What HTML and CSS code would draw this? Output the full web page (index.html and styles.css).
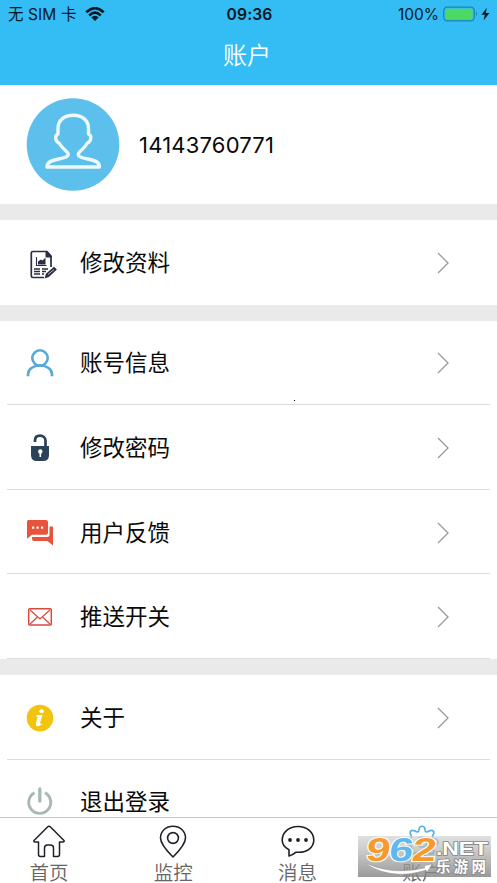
FILE: index.html
```html
<!DOCTYPE html>
<html lang="zh-CN">
<head>
<meta charset="utf-8">
<title>账户</title>
<link rel="stylesheet" href="styles.css">
</head>
<body>
<div class="app">
  <header class="header">
    <div class="status">
      <div class="carrier"><span>无 SIM 卡</span>
        <svg width="20" height="14" viewBox="0 0 20 14" fill="none" stroke="#071923" stroke-width="2.7"><path d="M1.300 5.200Q10-2.800 18.700 5.200M4.300 8.400Q10 3 15.700 8.400"/><path d="M6.300 10.300Q10 7 13.700 10.300L10 13.900Z" fill="#071923" stroke="none"/></svg>
      </div>
      <div class="clock">09:36</div>
      <div class="power"><span>100%</span>
        <svg width="48" height="16" viewBox="0 0 48 16"><rect x=".7" y="1.1" width="30.6" height="13.8" rx="3.6" fill="none" stroke="#1c83b0" stroke-width="1.2"/><rect x="2.4" y="2.8" width="27.2" height="10.4" rx="2" fill="#4cd964"/><path d="M33 5.6q2 2.4 0 4.8z" fill="#1c83b0"/><path d="M43.8 1.7 38.500 8.800h3.300l-1.200 5.800 5.800-7.700h-3.600z" fill="#071923"/></svg>
      </div>
    </div>
    <h1 class="title">账户</h1>
  </header>
  <main class="content">
    <section class="profile">
      <svg class="avatar" width="94" height="94" viewBox="0 0 94 94"><circle cx="47" cy="46.500" r="46.300" fill="#5dbfeb"/><path d="M47.300 17.800C38 17.800 32 23 32 31v5.500c-3.500 1.500-3 7 1 9 2 3.500 5 6.500 8 9 2 2 1.500 4-1 5C33 62.500 21 61.500 21 69.500H73.500C73.500 61.500 61.500 62.500 54.500 59.500c-2.500-1-3-3-1-5 3-2.500 6-5.500 8-9 4-2 4.500-7.500 1-9V31c0-8-6-13.200-15.200-13.200z" transform="translate(0 -.5)" fill="none" stroke="#eef9fe" stroke-width="3.400" stroke-linejoin="round"/></svg>
      <span class="phone">14143760771</span>
    </section>
    <section class="group plain">
      <div class="row"><svg class="icon low" viewBox="0 0 30 30" fill="none" stroke="#292d45"><path d="M19 27.500H8Q6.300 27.500 6.300 26V3Q6.300 1.500 8 1.500H22L26 6V17" stroke-width="1.700"/><path d="M21 1v6h6z" fill="#292d45"/><path d="M11.500 7v8.500h10" stroke-width="1.100"/><path d="M13 14.500v-3l3-2 1.500 1 3-3v7z" fill="#292d45" stroke="none"/><path d="M9 19h6M17 19h6M9 21.500h6M17 21.500h4M9 24h6M17 24h2" stroke-width="1.300"/><path d="m20.500 27.500 1-3.500 7.500-6.500 2 2-7.500 7z" fill="#292d45" stroke-width="1.200"/><path d="m23 24.500 6-5" stroke="#fff" stroke-width=".7"/></svg><span class="label">修改资料</span><svg class="chevron" viewBox="0 0 12 22"><path d="m1 1 10 10L1 21"/></svg></div>
    </section>
    <section class="group">
      <div class="row"><svg class="icon" viewBox="0 0 30 30" fill="none" stroke="#58a9d7" stroke-width="2.600"><circle cx="15" cy="10" r="7.700"/><path d="M3 28.200v-1.700c0-5.500 5-9 12-9s12 3.500 12 9v1.700"/></svg><span class="label">账号信息</span><svg class="chevron" viewBox="0 0 12 22"><path d="m1 1 10 10L1 21"/></svg></div>
      <div class="row"><svg class="icon" viewBox="0 0 30 30"><path d="M10 9V7.500C10 4.500 12 2.700 15 2.700s5.500 2 5.500 5V14" fill="none" stroke="#2b4059" stroke-width="2.700"/><path d="M6 13h18v9q0 6-6 6h-6q-6 0-6-6z" fill="#2b4059"/><circle cx="15.300" cy="18.500" r="2.200" fill="#fff"/><path d="M14.500 19h1.600v5h-1.600z" fill="#fff"/></svg><span class="label">修改密码</span><svg class="chevron" viewBox="0 0 12 22"><path d="m1 1 10 10L1 21"/></svg></div>
      <div class="row"><svg class="icon" viewBox="0 0 30 30" fill="#e9533b"><path d="M3.500 2H21q2 0 2 2v11q0 1.700-2 1.700H7l-5 4V4q0-2 1.500-2z"/><path d="M24.500 8.500H28V27.500l-5.500-4.500H9q-2 0-2-2v-2h15.500q2 0 2-2z"/><path d="M7 8.500h2.200v2.200H7zM11.500 8.500h2.200v2.200h-2.200zM16 8.500h2.200v2.200H16z" fill="#fff"/></svg><span class="label">用户反馈</span><svg class="chevron" viewBox="0 0 12 22"><path d="m1 1 10 10L1 21"/></svg></div>
      <div class="row"><svg class="icon" viewBox="0 0 30 30" fill="none" stroke="#d34b3e" stroke-width="1.500"><rect x="3.700" y="6.700" width="22.600" height="16.200" rx="1" /><path d="m5 8 10 9L25 8M5 22l7.500-7M25 22l-7.500-7" stroke-width="1.200"/></svg><span class="label">推送开关</span><svg class="chevron" viewBox="0 0 12 22"><path d="m1 1 10 10L1 21"/></svg></div>
    </section>
    <section class="group">
      <div class="row"><svg class="icon" viewBox="0 0 30 30"><circle cx="15" cy="15" r="13.300" fill="#f1c40f"/><ellipse cx="16.600" cy="8.200" rx="2.200" ry="1.900" fill="#fff"/><path d="M11.500 12h6l-2.500 8q-.3 1.500 2.500.3-1.500 3-4.500 2.900-3-.2-2-3.200l1.600-5.500q.3-1-1.500-1z" fill="#fff"/></svg><span class="label">关于</span><svg class="chevron" viewBox="0 0 12 22"><path d="m1 1 10 10L1 21"/></svg></div>
      <div class="row"><svg class="icon" viewBox="0 0 30 30" fill="none" stroke="#a9b8b6" stroke-width="2.900"><path d="M9.500 5.700a11 11 0 1 0 10.500 0"/><path d="M14.800 2v12" stroke-width="3.300" stroke-linecap="round"/></svg><span class="label">退出登录</span></div>
    </section>
  </main>
  <nav class="tabs">
    <div class="tab"><svg width="34" height="34" viewBox="0 0 34 34" fill="none" stroke="#202027" stroke-width="1.500" stroke-linejoin="round"><path d="M18.500 2 32 15.500q.5 1.500-1 1.500h-3.500v12.500q0 2-2 2h-4V23q0-3-3-3h-3q-3 0-3 3v8.500h-4q-2 0-2-2V17H3q-1.500 0-1-1.500L15.500 2q1.500-1.400 3 0"/></svg><span>首页</span></div>
    <div class="tab"><svg width="34" height="34" viewBox="0 0 34 34" fill="none" stroke="#202027" stroke-width="1.600" stroke-linejoin="round"><path d="M17 32Q4.500 19.500 4.500 13C4.500 6 10 1.200 17 1.200S29.500 6 29.500 13Q29.500 19.500 17 32z"/><circle cx="17" cy="13" r="5.400"/></svg><span>监控</span></div>
    <div class="tab"><svg width="34" height="34" viewBox="0 0 34 34" fill="none" stroke="#202027" stroke-width="1.600" stroke-linejoin="round"><path d="M8 31v-6.200C3.500 22.500 1.200 19 1.200 15 1.200 7.500 8 1.500 17 1.500S32.800 7.500 32.800 15 26 27.500 17 27.200h-2Q12 30 8 31z"/><g fill="#202027" stroke="none"><circle cx="9" cy="15" r="1.900"/><circle cx="17" cy="15" r="1.900"/><circle cx="25" cy="15" r="1.900"/></g></svg><span>消息</span></div>
    <div class="tab"><svg width="34" height="34" viewBox="0 0 34 34" fill="none" stroke="#55b3e2" stroke-width="1.700" stroke-linejoin="round"><path d="M14 5c0-5 6-5 6 0 0 2 2 2.500 4 1 4-2 6 1 4 4-1 2-.5 4 2 4 4 0 4 6 0 6-2.500 0-3 2-2 4 2 4-1 6-4 4-2-1-4-.5-4 2 0 4-6 4-6 0 0-2.500-2-3-4-2-4 2-6-1-4-4 1-2 .5-4-2-4-4 0-4-6 0-6 2.500 0 3-2 2-4-2-3 0-6 4-4 2 1.500 4 1 4-1z"/><circle cx="17" cy="17" r="5"/></svg><span>账户</span></div>
  </nav>
  <svg class="watermark" width="134" height="42" viewBox="0 0 134 42">
    <defs>
      <linearGradient id="plate" x2="0" y2="1"><stop offset="0" stop-color="#d0d0d0" stop-opacity=".65"/><stop offset="1" stop-color="#808080" stop-opacity=".8"/></linearGradient>
    </defs>
    <rect width="133" height="41" fill="url(#plate)"/>
    <g class="digits" transform="translate(4.500 0) skewX(-8)"><text x="6" y="24.500" textLength="24" lengthAdjust="spacingAndGlyphs" fill="#f59a2d">9</text><text x="29" y="24.500" textLength="24" lengthAdjust="spacingAndGlyphs" fill="#61b8ed">6</text><text x="52" y="24.500" textLength="24" lengthAdjust="spacingAndGlyphs" fill="#f59a2d">2</text></g>
    <path d="M7 27Q35 40 67 32l-1-2 8-2-5 8-1-2Q33 45 7 27z" fill="#fff" stroke="#999" stroke-width=".4"/>
    <text class="domain" x="78" y="19" textLength="52" lengthAdjust="spacingAndGlyphs">.NET</text>
    <text class="site" x="78" y="36" textLength="50">乐游网</text>
  </svg>
  <i class="speck"></i>
</div>
</body>
</html>
```
FILE: styles.css
```css
* { box-sizing: border-box; }
body { margin: 0; background: #fff; overflow: hidden; }
.app {
  position: relative;
  height: 883px;
  display: flex;
  flex-direction: column;
  overflow: hidden;
  font-family: Inter, "Noto Sans CJK SC", sans-serif;
  color: #0a0a0a;
}
svg { display: block; flex: none; }
.header { height: 85px; flex: none; background: #34bcf5; }
.status {
  height: 28px;
  padding: 0 6px 0 8px;
  display: grid;
  grid-template-columns: 1fr auto 1fr;
  align-items: center;
  font-size: 15.5px;
  line-height: 20px;
  color: #071923;
}
.carrier, .power { display: flex; align-items: center; }
.carrier { gap: 8px; }
.carrier span { letter-spacing: .1px; padding-top: 1px; }
.power { justify-content: flex-end; gap: 4px; }
.power span, .clock { padding-top: 1px; }
.clock { font-weight: 600; font-size: 15.7px; letter-spacing: .1px; }
.title {
  margin: 9px 3px 0 0;
  text-align: center;
  font-size: 24px;
  line-height: 37px;
  font-weight: 350;
  color: #fff;
}
.content {
  flex: 1;
  min-height: 0;
  overflow: hidden;
  background: #eaeaea;
  display: flex;
  flex-direction: column;
  gap: 16px;
}
.profile {
  height: 119px;
  flex: none;
  padding-left: 26px;
  display: flex;
  align-items: center;
  gap: 19px;
  background: #fff;
}
.phone { font-size: 22px; letter-spacing: .2px; }
.group { flex: none; background: #fff; }
.row {
  height: 84.6px;
  margin: 0 7px;
  padding: 2px 41px 0 18px;
  display: flex;
  align-items: center;
  border-bottom: 1px solid #dcdcdc;
}
.plain .row { border-bottom-color: transparent; }
.icon { width: 30px; height: 30px; overflow: visible; }
.low { margin-top: 5px; }
.label {
  flex: 1;
  margin-left: 25px;
  font-size: 22.5px;
  line-height: 34px;
}
.chevron { width: 12px; height: 22px; fill: none; stroke: #999; stroke-width: 1.3; }
.tabs {
  height: 66px;
  flex: none;
  display: grid;
  grid-template-columns: repeat(4, 124.25px);
  margin-left: -13px;
  padding-top: 7px;
  background: #fff;
  border-top: 1px solid #c6c6c6;
}
.tab {
  display: flex;
  flex-direction: column;
  align-items: center;
  gap: 4px;
  font-size: 19.5px;
  line-height: 20px;
  font-weight: 350;
  color: #666;
}
.watermark { position: absolute; left: 358px; top: 836px; overflow: visible; }
.digits {
  font: 700 33px "Liberation Sans", sans-serif;
  stroke: #fff;
  stroke-width: 2px;
  paint-order: stroke;
}
.domain, .site { fill: #fff; stroke: #888; stroke-width: 1.6px; paint-order: stroke; }
.domain { font: 700 19px "Liberation Sans", sans-serif; }
.site { font: 700 14.5px "Noto Sans CJK SC", sans-serif; }
.speck { position: absolute; left: 294px; top: 400px; width: 1px; height: 1px; background: #000; }
```
